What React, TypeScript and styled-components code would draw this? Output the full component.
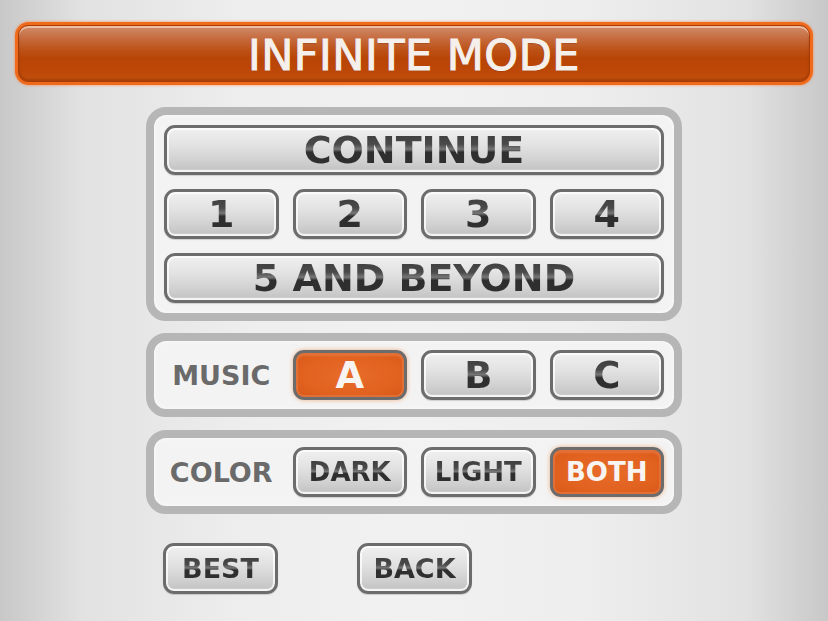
import React from "react"
import styled, { createGlobalStyle, css } from "styled-components"

const GlobalStyle = createGlobalStyle`
	html, body {
		margin: 0;
		padding: 0;
		height: 100%;
	}
	body {
		background: linear-gradient(to right, #c8c8c8 0%, #e2e2e2 10%, #eeeeee 30%, #f1f1f1 50%, #eeeeee 70%, #e2e2e2 90%, #c8c8c8 100%);
		font-family: "DejaVu Sans", "Liberation Sans", sans-serif;
		overflow: hidden;
	}
`

const Screen = styled.div`
	width: 828px;
	height: 621px;
	box-sizing: border-box;
	padding-top: 22px;
	display: flex;
	flex-direction: column;
	align-items: center;
`

const TitleBar = styled.div`
	width: 798px;
	height: 63px;
	box-sizing: border-box;
	border-radius: 14px;
	border: 3px solid #f06a1c;
	box-shadow: 0 0 3px rgba(245, 110, 30, 0.7);
	background: #f06a1c;
	display: flex;
`

const TitleInner = styled.div`
	flex: 1;
	border-radius: 10px;
	border: 1px solid #a83a06;
	background: linear-gradient(to bottom, #d08c6a 0%, #c66c40 22%, #bc5014 45%, #b84406 60%, #bd4808 85%, #c5520e 100%);
	box-shadow: inset 0 2px 0 rgba(255, 225, 205, 0.6), inset 0 -2px 2px rgba(120, 40, 0, 0.4);
	display: flex;
	align-items: center;
	justify-content: center;
	padding-top: 3px;
	color: #f6f0ec;
	font-size: 43px;
	letter-spacing: 0.5px;
	-webkit-text-stroke: 1px #f6f0ec;
	text-shadow: 0 1px 1px rgba(90, 30, 0, 0.4);
`

const Panel = styled.div<{ $top: number; $pad?: number }>`
	margin-top: ${({ $top }) => $top}px;
	width: 536px;
	box-sizing: border-box;
	border: 8px solid #b6b6b6;
	border-radius: 20px;
	background: #f3f3f3;
	box-shadow: inset 0 0 4px rgba(255, 255, 255, 0.9);
	padding: ${({ $pad }) => $pad ?? 9}px 10px;
	display: grid;
	grid-template-columns: repeat(4, 1fr);
	grid-auto-rows: 50px;
	gap: 14px;
`

const Label = styled.div`
	display: flex;
	align-items: center;
	justify-content: center;
	font-weight: bold;
	font-size: 27px;
	color: #6a6a6a;
`

const Button = styled.div<{ $size: number; $wide?: boolean; $on?: boolean }>`
	grid-column: ${({ $wide }) => ($wide ? "1 / -1" : "auto")};
	box-sizing: border-box;
	height: 50px;
	border: 3px solid #6c6c6c;
	border-radius: 11px;
	display: flex;
	align-items: center;
	justify-content: center;
	font-weight: bold;
	font-size: ${({ $size }) => $size}px;
	${({ $on }) =>
		$on
			? css`
					background: radial-gradient(ellipse at center, #e86c2a 0%, #e26220 60%, #d85818 100%);
					box-shadow: inset 0 0 0 2px #e27036, inset 0 2px 3px rgba(255, 170, 120, 0.6), 0 0 4px rgba(240, 120, 40, 0.55);
					color: #f7f4f2;
			  `
			: css`
					background: linear-gradient(to bottom, #f0f0f0 0%, #e2e2e2 40%, #d0d0d0 75%, #c6c6c6 92%, #d8d8d8 100%);
					box-shadow: inset 0 0 0 2px rgba(255, 255, 255, 0.75), 0 1px 1px rgba(0, 0, 0, 0.15);
			  `}
`

const Ink = styled.span`
	background: linear-gradient(to bottom, #3c3c3c 0%, #4a4a4a 35%, #777 48%, #2e2e2e 56%, #303030 100%);
	-webkit-background-clip: text;
	background-clip: text;
	color: transparent;
	line-height: 1;
`

const Footer = styled.div`
	margin-top: 29px;
	width: 536px;
	box-sizing: border-box;
	padding-left: 17px;
	display: flex;
	gap: 79px;
	& > div {
		width: 115px;
		height: 51px;
	}
`

const Btn: React.FC<{ text: string; size?: number; wide?: boolean; on?: boolean }> = ({ text, size = 26, wide, on }) => (
	<Button $size={size} $wide={wide} $on={on}>
		{on ? text : <Ink>{text}</Ink>}
	</Button>
)

export default function App() {
	return (
		<>
			<GlobalStyle />
			<Screen>
				<TitleBar>
					<TitleInner>INFINITE MODE</TitleInner>
				</TitleBar>

				<Panel $top={22} $pad={10}>
					<Btn text="CONTINUE" size={38} wide />
					{["1", "2", "3", "4"].map((n) => (
						<Btn key={n} text={n} size={38} />
					))}
					<Btn text="5 AND BEYOND" size={38} wide />
				</Panel>

				<Panel $top={12}>
					<Label>MUSIC</Label>
					<Btn text="A" size={37} on />
					<Btn text="B" size={37} />
					<Btn text="C" size={37} />
				</Panel>

				<Panel $top={13}>
					<Label>COLOR</Label>
					<Btn text="DARK" />
					<Btn text="LIGHT" />
					<Btn text="BOTH" on />
				</Panel>

				<Footer>
					<Btn text="BEST" size={27} />
					<Btn text="BACK" size={27} />
				</Footer>
			</Screen>
		</>
	)
}
